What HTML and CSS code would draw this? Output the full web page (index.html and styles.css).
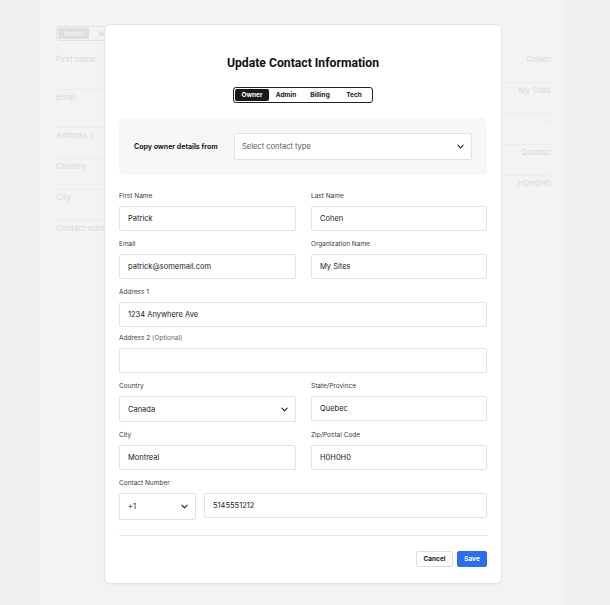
FILE: index.html
```html
<!DOCTYPE html>
<html>
<head>
<meta charset="utf-8">
<link rel="stylesheet" href="styles.css">
</head>
<body>
<div class="page">
  <div class="bg-tabs">
    <span class="bg-tab bg-tab-active">Owner</span>
    <span class="bg-tab">Admin</span>
    <span class="bg-tab">Billing</span>
    <span class="bg-tab">Tech</span>
  </div>
  <div class="bg-cols">
    <div class="bg-col bg-left">
      <div class="bg-row bg-tall">First name</div>
      <div class="bg-row bg-tall">Email</div>
      <div class="bg-row">Address 1</div>
      <div class="bg-row">Country</div>
      <div class="bg-row">City</div>
      <div class="bg-row bg-last">Contact number</div>
    </div>
    <div class="bg-col bg-right">
      <div class="bg-row">Cohen</div>
      <div class="bg-row">My Sites</div>
      <div class="bg-row">–</div>
      <div class="bg-row">Quebec</div>
      <div class="bg-row bg-last">H0H0H0</div>
    </div>
  </div>
</div>

<div class="modal">
  <h1 class="title">Update Contact Information</h1>
  <div class="tabs-wrap">
    <div class="tabs">
      <span class="tab tab-active">Owner</span>
      <span class="tab">Admin</span>
      <span class="tab">Billing</span>
      <span class="tab">Tech</span>
    </div>
  </div>
  <div class="copy-box">
    <span class="copy-label">Copy owner details from</span>
    <div class="select select-wide">
      <span class="placeholder">Select contact type</span>
      <svg class="chev" viewBox="0 0 8 5" width="7" height="5"><path d="M1 1l3 3 3-3" fill="none" stroke="#222" stroke-width="1.3" stroke-linecap="round" stroke-linejoin="round"/></svg>
    </div>
  </div>

  <div class="form">
    <div class="field">
      <label class="label">First Name</label>
      <div class="input">Patrick</div>
    </div>
    <div class="field">
      <label class="label">Last Name</label>
      <div class="input">Cohen</div>
    </div>
    <div class="field">
      <label class="label">Email</label>
      <div class="input">patrick@somemail.com</div>
    </div>
    <div class="field">
      <label class="label">Organization Name</label>
      <div class="input">My Sites</div>
    </div>
    <div class="field full">
      <label class="label">Address 1</label>
      <div class="input">1234 Anywhere Ave</div>
    </div>
    <div class="field full addr2">
      <label class="label">Address 2 <span class="opt">(Optional)</span></label>
      <div class="input"></div>
    </div>
    <div class="field">
      <label class="label">Country</label>
      <div class="select">
        <span>Canada</span>
        <svg class="chev" viewBox="0 0 8 5" width="7" height="5"><path d="M1 1l3 3 3-3" fill="none" stroke="#222" stroke-width="1.3" stroke-linecap="round" stroke-linejoin="round"/></svg>
      </div>
    </div>
    <div class="field">
      <label class="label">State/Province</label>
      <div class="input">Quebec</div>
    </div>
    <div class="field city">
      <label class="label">City</label>
      <div class="input">Montreal</div>
    </div>
    <div class="field city">
      <label class="label">Zip/Postal Code</label>
      <div class="input">H0H0H0</div>
    </div>
    <div class="field full">
      <label class="label">Contact Number</label>
      <div class="phone">
        <div class="select select-code">
          <span>+1</span>
          <svg class="chev" viewBox="0 0 8 5" width="7" height="5"><path d="M1 1l3 3 3-3" fill="none" stroke="#222" stroke-width="1.3" stroke-linecap="round" stroke-linejoin="round"/></svg>
        </div>
        <div class="input phone-input">5145551212</div>
      </div>
    </div>
  </div>

  <div class="divider"></div>
  <div class="actions">
    <button class="btn btn-cancel">Cancel</button>
    <button class="btn btn-save">Save</button>
  </div>
</div>
</body>
</html>
```

FILE: styles.css
```css
* { box-sizing: border-box; }
html, body { margin: 0; padding: 0; }
body {
  background: #f0f0f0;
  font-family: Inter, "Liberation Sans", sans-serif;
  width: 610px;
  height: 605px;
  overflow: hidden;
  position: relative;
}

/* faded background page */
.page {
  margin-left: 40px;
  width: 522px;
  height: 605px;
  background: #f3f3f3;
  padding: 20px 11px 0 16px;
}
.bg-tabs {
  display: inline-flex;
  align-items: center;
  width: 139px;
  height: 15px;
  border: 1px solid #e0e0e0;
  border-radius: 3px;
  padding: 1px;
  gap: 4px;
}
.bg-tab {
  font-size: 6px;
  font-weight: 700;
  color: #dadada;
  width: 32px;
  text-align: center;
  line-height: 11px;
}
.bg-tab-active {
  background: #dedede;
  color: #f2f2f2;
  border-radius: 2px;
}
.bg-cols {
  display: flex;
  justify-content: space-between;
  margin-top: 11px;
}
.bg-col { display: flex; flex-direction: column; }
.bg-left { width: 200px; }
.bg-right { width: 200px; text-align: right; }
.bg-row {
  font-size: 8px;
  color: #d9d9d9;
  height: 31px;
  line-height: 15px;
  border-bottom: 1px solid #ececec;
}
.bg-tall { height: 38px; }
.bg-last { border-bottom: none; }

/* modal */
.modal {
  position: absolute;
  left: 104px;
  top: 24px;
  width: 398px;
  height: 560px;
  background: #ffffff;
  border: 1px solid #e4e4e4;
  border-radius: 6px;
  box-shadow: 0 1px 2px rgba(0,0,0,0.04);
  padding: 30px 14px 0 14px;
}
.title {
  margin: 0;
  font-family: Roboto, Inter, sans-serif;
  font-size: 12.2px;
  font-weight: 700;
  color: #111;
  text-align: center;
  line-height: 16px;
}
.tabs-wrap {
  display: flex;
  justify-content: center;
  margin-top: 16px;
}
.tabs {
  display: flex;
  align-items: center;
  height: 16px;
  border: 1px solid #222;
  border-radius: 3px;
  padding: 1px;
}
.tab {
  width: 34px;
  height: 12px;
  line-height: 12px;
  text-align: center;
  font-size: 6.5px;
  font-weight: 700;
  color: #1a1a1a;
}
.tab-active {
  background: #1a1a1a;
  color: #fff;
  border-radius: 2px;
}

.copy-box {
  margin-top: 15px;
  height: 57px;
  background: #f7f7f7;
  border-radius: 5px;
  padding: 15px;
  display: flex;
  align-items: center;
}
.copy-label {
  width: 100px;
  flex: none;
  font-size: 7px;
  font-weight: 700;
  color: #1a1a1a;
}
.select {
  height: 26px;
  background: #fff;
  border: 1px solid #e2e2e2;
  border-radius: 2px;
  display: flex;
  align-items: center;
  justify-content: space-between;
  padding: 0 7px 0 8px;
  font-size: 7.5px;
  color: #1a1a1a;
}
.select-wide { flex: 1; height: 27px; padding-left: 7px; }
.placeholder { color: #555; }
.chev { display: block; }

.form {
  margin-top: 16px;
  display: grid;
  grid-template-columns: 177px 176px;
  column-gap: 15px;
  row-gap: 8px;
}
.field { display: flex; flex-direction: column; }
.full { grid-column: 1 / 3; }
.addr2 { margin-top: -2px; }
.label {
  font-size: 6.5px;
  color: #3a3a3a;
  line-height: 10px;
  margin-bottom: 5px;
}
.opt { color: #666; }
.input {
  height: 25px;
  border: 1px solid #e2e2e2;
  border-radius: 2px;
  padding: 0 8px;
  font-size: 7.5px;
  line-height: 23px;
  color: #1a1a1a;
  background: #fff;
}
.phone {
  display: flex;
  gap: 8px;
  align-items: flex-start;
}
.select-code { width: 77px; height: 27px; flex: none; }
.phone-input { flex: 1; }

.divider {
  margin-top: 15px;
  height: 1px;
  background: #e6e6e6;
}
.actions {
  display: flex;
  justify-content: flex-end;
  gap: 4px;
  margin-top: 15px;
}
.btn {
  font-family: Inter, "Liberation Sans", sans-serif;
  height: 16px;
  font-size: 6.5px;
  font-weight: 700;
  border-radius: 2px;
  padding: 0;
  cursor: pointer;
}
.btn-cancel {
  width: 37px;
  background: #fff;
  border: 1px solid #dcdcdc;
  color: #1a1a1a;
}
.btn-save {
  width: 30px;
  background: #2b6ff0;
  border: 1px solid #2b6ff0;
  color: #fff;
}
```
